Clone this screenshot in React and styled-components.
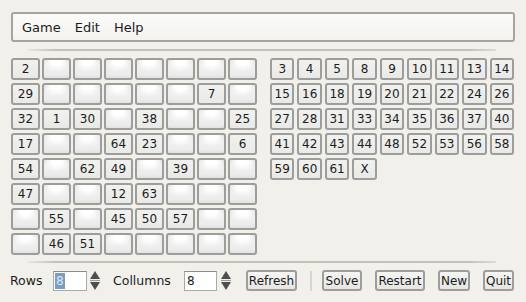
import React from "react";
import styled, { createGlobalStyle } from "styled-components";

const Global = createGlobalStyle`
  html, body {
    margin: 0;
    padding: 0;
    background: #f1f0ea;
    font-family: "DejaVu Sans", "Liberation Sans", sans-serif;
    color: #1c1c1c;
  }
`;

const Window = styled.div`
  width: 526px;
  height: 302px;
  box-sizing: border-box;
  padding: 12px 11px 0 11px;
  overflow: hidden;
`;

const MenuBar = styled.div`
  height: 30px;
  box-sizing: border-box;
  border: 2px solid #a4a4a0;
  border-radius: 3px;
  background: linear-gradient(#fafaf8, #f4f3ef);
  display: flex;
  align-items: center;
  gap: 14px;
  padding-left: 9px;
  font-size: 13px;
`;

const MenuItem = styled.span``;

const Separator = styled.div`
  height: 2px;
  margin: ${(p) => p.$top}px 19px 0 17px;
  background: linear-gradient(to right, rgba(190, 190, 184, 0.2), #c2c2bb 6%, #c2c2bb 94%, rgba(190, 190, 184, 0.4));
`;

const Boards = styled.div`
  display: flex;
  gap: 13px;
  margin-top: 7px;
`;

const Grid = styled.div`
  display: grid;
  grid-template-columns: ${(p) => p.$cols};
  grid-auto-rows: 22px;
  column-gap: ${(p) => p.$gap}px;
  row-gap: 3px;
  width: ${(p) => p.$width}px;
`;

const Cell = styled.div`
  box-sizing: border-box;
  border: 2px solid #9d9d9b;
  border-radius: 3px;
  display: flex;
  align-items: center;
  justify-content: center;
  font-size: 12px;
  background: ${(p) =>
    p.$empty
      ? "radial-gradient(ellipse 60% 55% at 50% 10%, #ffffff 35%, rgba(255,255,255,0) 100%), linear-gradient(#dcdcdc, #efefef 45%, #ececec 80%, #e2e2e2)"
      : "linear-gradient(#f1f1ef, #e9e9e7)"};
`;

const Controls = styled.div`
  display: flex;
  align-items: center;
  height: 21px;
  margin: 7px 0 0 -1px;
  font-size: 12px;
`;

const Label = styled.span`
  flex: none;
  width: ${(p) => p.$w}px;
  font-size: 12.5px;
`;

const SpinInput = styled.div`
  flex: none;
  width: ${(p) => p.$w}px;
  height: 20px;
  box-sizing: border-box;
  border: 1px solid #a9a9a5;
  border-top-color: #8c8c88;
  background: #ffffff;
  display: flex;
  align-items: center;
  padding-left: 1px;
  font-size: 12px;
`;

const Selected = styled.span`
  background: #7d9cc2;
  color: #dfe8f3;
  padding: 1px 1px;
  line-height: 14px;
`;

const Plain = styled.span`
  padding-left: 1px;
`;

const SpinArrows = styled.svg`
  margin: 0 ${(p) => p.$mr}px 0 ${(p) => p.$ml}px;
  flex: none;
`;

const Button = styled.button`
  flex: none;
  width: ${(p) => p.$w}px;
  height: 21px;
  box-sizing: border-box;
  border: 2px solid #9d9d9b;
  border-radius: 3px;
  background: linear-gradient(#f5f5f3, #e6e6e4);
  font-family: inherit;
  font-size: 12px;
  color: #1c1c1c;
  padding: 0;
  margin-right: ${(p) => p.$mr ?? 13}px;
  line-height: 1;
  text-align: center;
`;

const VSep = styled.div`
  flex: none;
  width: 2px;
  height: 20px;
  background: #d6d6d0;
  margin-right: 10px;
`;

const left = [
  ["2", "", "", "", "", "", "", ""],
  ["29", "", "", "", "", "", "7", ""],
  ["32", "1", "30", "", "38", "", "", "25"],
  ["17", "", "", "64", "23", "", "", "6"],
  ["54", "", "62", "49", "", "39", "", ""],
  ["47", "", "", "12", "63", "", "", ""],
  ["", "55", "", "45", "50", "57", "", ""],
  ["", "46", "51", "", "", "", "", ""],
].flat();

const right = [
  "3", "4", "5", "8", "9", "10", "11", "13", "14",
  "15", "16", "18", "19", "20", "21", "22", "24", "26",
  "27", "28", "31", "33", "34", "35", "36", "37", "40",
  "41", "42", "43", "44", "48", "52", "53", "56", "58",
  "59", "60", "61", "X",
];

const Arrows = ({ ml, mr }) => (
  <SpinArrows $ml={ml} $mr={mr} width="10" height="21" viewBox="0 0 10 21">
    <polygon points="5,1 10,9 0,9" fill="#4e4e4e" />
    <rect x="0" y="10" width="10" height="1" fill="#9a9a96" />
    <polygon points="0,12 10,12 5,20" fill="#4e4e4e" />
  </SpinArrows>
);

export default function App() {
  return (
    <>
      <Global />
      <Window>
        <MenuBar>
          <MenuItem>Game</MenuItem>
          <MenuItem>Edit</MenuItem>
          <MenuItem>Help</MenuItem>
        </MenuBar>
        <Separator $top={7} />
        <Boards>
          <Grid $cols="repeat(8, 29px)" $gap={2} $width={246}>
            {left.map((v, i) => (
              <Cell key={i} $empty={v === ""}>{v}</Cell>
            ))}
          </Grid>
          <Grid $cols="repeat(9, 1fr)" $gap={3} $width={244}>
            {right.map((v, i) => (
              <Cell key={i}>{v}</Cell>
            ))}
          </Grid>
        </Boards>
        <Separator $top={6} />
        <Controls>
          <Label $w={43}>Rows</Label>
          <SpinInput $w={34}>
            <Selected>8</Selected>
          </SpinInput>
          <Arrows ml={3} mr={13} />
          <Label $w={71}>Collumns</Label>
          <SpinInput $w={33}>
            <Plain>8</Plain>
          </SpinInput>
          <Arrows ml={4} mr={15} />
          <Button $w={51}>Refresh</Button>
          <VSep />
          <Button $w={40}>Solve</Button>
          <Button $w={50}>Restart</Button>
          <Button $w={32}>New</Button>
          <Button $w={31} $mr={0}>Quit</Button>
        </Controls>
      </Window>
    </>
  );
}
